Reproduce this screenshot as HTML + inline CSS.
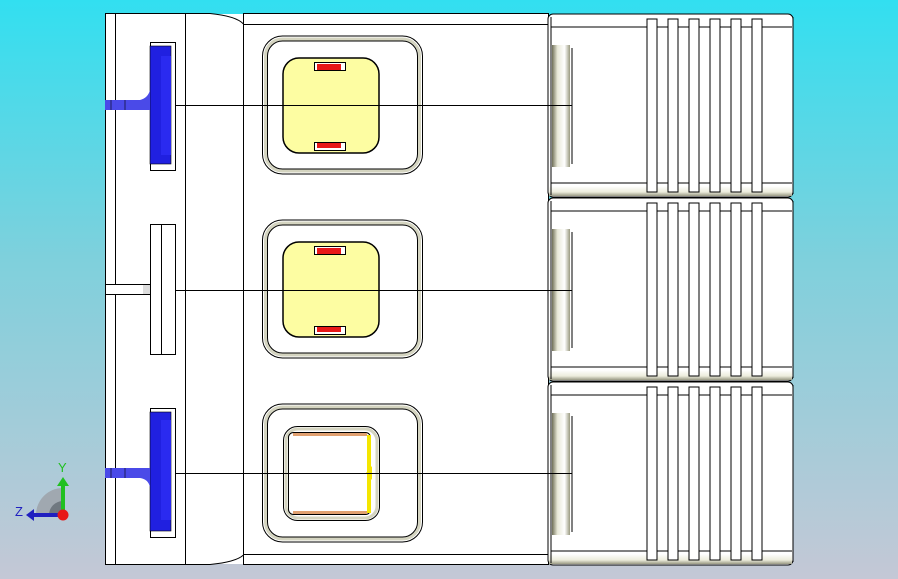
<!DOCTYPE html>
<html><head><meta charset="utf-8"><style>
html,body{margin:0;padding:0;width:898px;height:579px;overflow:hidden}
body{background:linear-gradient(#32dff0 0%,#7fd0dc 45%,#c4c8d6 100%);font-family:"Liberation Sans",sans-serif}
svg{position:absolute;left:0;top:0}
</style></head><body>
<svg width="898" height="579" viewBox="0 0 898 579" xmlns="http://www.w3.org/2000/svg">
<defs>
<linearGradient id="cyl" x1="0" x2="1" y1="0" y2="0">
<stop offset="0" stop-color="#707058"/><stop offset="0.3" stop-color="#e8e8d8"/><stop offset="0.7" stop-color="#ffffff"/><stop offset="1" stop-color="#9a9a80"/></linearGradient>
<linearGradient id="band" x1="0" x2="0" y1="0" y2="1">
<stop offset="0" stop-color="#ffffff"/><stop offset="0.6" stop-color="#ececdc"/><stop offset="1" stop-color="#9a9a84"/></linearGradient>
<g id="fins">
<rect x="647" y="0" width="10" height="173" fill="#fff" stroke="#000"/>
<rect x="668" y="0" width="10" height="173" fill="#fff" stroke="#000"/>
<rect x="689" y="0" width="10" height="173" fill="#fff" stroke="#000"/>
<rect x="710" y="0" width="10" height="173" fill="#fff" stroke="#000"/>
<rect x="731" y="0" width="10" height="173" fill="#fff" stroke="#000"/>
<rect x="752" y="0" width="10" height="173" fill="#fff" stroke="#000"/>
</g>
<g id="mod">
<rect x="548" y="0" width="245" height="183" rx="5" fill="#fff" stroke="#000"/>
<rect x="549" y="172" width="243" height="10" fill="url(#band)"/>
<line x1="551" y1="13" x2="792" y2="13" stroke="#000"/>
<line x1="551" y1="169" x2="792" y2="169" stroke="#000"/>
<line x1="551" y1="3" x2="551" y2="181" stroke="#000"/>
<rect x="552" y="31" width="18" height="122" fill="url(#cyl)"/>
<line x1="572" y1="34" x2="572" y2="150" stroke="#000"/>
<use href="#fins" y="5"/>
<line x1="793" y1="3" x2="793" y2="180" stroke="#000"/>
</g>
<g id="win">
<rect x="262.5" y="0" width="160" height="138" rx="20" fill="none" stroke="#000"/>
<rect x="265.5" y="3" width="154" height="132" rx="17" fill="none" stroke="#d4d4c0" stroke-width="3"/>
<rect x="267.5" y="5" width="150" height="128" rx="15" fill="none" stroke="#000"/>
</g>
</defs>

<rect x="105.5" y="13.5" width="80" height="551" fill="#fff" stroke="#000"/>
<line x1="115.5" y1="14" x2="115.5" y2="565" stroke="#000"/>
<rect x="186" y="14" width="57" height="550" fill="#fff"/>
<path d="M185.5 13.5 L210 13.5 Q236 16 243.5 24" fill="none" stroke="#000"/>
<path d="M185.5 564.5 L210 564.5 Q236 562 243.5 555" fill="none" stroke="#000"/>
<rect x="243.5" y="13.5" width="305" height="551" fill="#fff" stroke="#000"/>
<line x1="243" y1="24.5" x2="548" y2="24.5" stroke="#000"/>
<line x1="243" y1="554.5" x2="548" y2="554.5" stroke="#000"/>

<use href="#mod" y="14"/>
<use href="#mod" y="198"/>
<use href="#mod" y="382"/>

<use href="#win" y="36"/>
<use href="#win" y="220"/>
<use href="#win" y="404"/>

<rect x="283" y="58" width="96" height="95" rx="16" fill="#fdfda2" stroke="#000" stroke-width="1.5"/>
<rect x="314.5" y="62.5" width="31" height="8" fill="#fff" stroke="#000"/>
<rect x="317" y="64" width="24" height="6" fill="#e81818"/>
<rect x="314.5" y="142.5" width="31" height="8" fill="#fff" stroke="#000"/>
<rect x="317" y="143" width="24" height="5" fill="#e81818"/>
<rect x="283" y="242" width="96" height="95" rx="16" fill="#fdfda2" stroke="#000" stroke-width="1.5"/>
<rect x="314.5" y="246.5" width="31" height="8" fill="#fff" stroke="#000"/>
<rect x="317" y="248" width="24" height="6" fill="#e81818"/>
<rect x="314.5" y="326.5" width="31" height="8" fill="#fff" stroke="#000"/>
<rect x="317" y="327" width="24" height="5" fill="#e81818"/>
<rect x="283.5" y="426.5" width="96" height="94" rx="14" fill="#fff" stroke="#000"/>
<rect x="286" y="429" width="91" height="89" rx="12" fill="none" stroke="#d4d4c0" stroke-width="3"/>
<rect x="288.5" y="432.5" width="82" height="82" rx="5" fill="#fff" stroke="#000"/>
<rect x="293" y="433" width="74" height="3" fill="#e0a070"/>
<rect x="293" y="511" width="74" height="3" fill="#e0a070"/>
<rect x="367" y="435" width="4" height="78" fill="#f4e600"/>
<path d="M372 466 L366 473 L372 480 Z" fill="#f4e600"/>

<line x1="105" y1="105.5" x2="572" y2="105.5" stroke="#000"/>
<line x1="105" y1="290.5" x2="572" y2="290.5" stroke="#000"/>
<line x1="105" y1="473.5" x2="572" y2="473.5" stroke="#000"/>

<rect x="150.5" y="42.5" width="25" height="128" fill="#fff" stroke="#000"/>
<rect x="150" y="46" width="21" height="118" fill="#2020e0" stroke="#000" stroke-width="0.6"/>
<line x1="161.5" y1="56" x2="161.5" y2="155" stroke="#000" stroke-width="0.6"/>
<rect x="161" y="56" width="10" height="99" fill="#2a2af0"/>
<path d="M105 100 L140 100 Q148 98 150 90 L150 110 L105 110 Z" fill="#4a4ae8"/>
<line x1="111" y1="100" x2="111" y2="110" stroke="#000" stroke-width="0.6"/>
<line x1="125" y1="100" x2="125" y2="110" stroke="#000" stroke-width="0.6"/>
<rect x="150.5" y="224.5" width="25" height="130" fill="#fff" stroke="#000"/>
<line x1="161.5" y1="225" x2="161.5" y2="354" stroke="#000"/>
<rect x="105.5" y="284.5" width="45" height="10" fill="#fff" stroke="#000"/>
<rect x="143" y="285" width="7" height="9" fill="#ddd"/>
<rect x="150.5" y="408.5" width="25" height="129" fill="#fff" stroke="#000"/>
<rect x="150" y="412" width="21" height="119" fill="#2020e0" stroke="#000" stroke-width="0.6"/>
<rect x="161" y="420" width="10" height="100" fill="#2a2af0"/>
<path d="M105 468 L150 468 L150 487 Q148 479 140 478 L105 478 Z" fill="#4a4ae8"/>
<line x1="111" y1="468" x2="111" y2="478" stroke="#000" stroke-width="0.6"/>
<line x1="125" y1="468" x2="125" y2="478" stroke="#000" stroke-width="0.6"/>

<path d="M36 515 A27 27 0 0 1 63 488 L63 515 Z" fill="#a0a8b0"/>
<path d="M49 515 A14 14 0 0 1 63 501 L63 515 Z" fill="#707880"/>
<rect x="61" y="484" width="4" height="30" fill="#20c020"/>
<path d="M57 486 L63 477 L69 486 Z" fill="#20c020"/>
<rect x="32" y="513" width="30" height="4" fill="#2020c0"/>
<path d="M34 509 L26 515 L34 521 Z" fill="#2020c0"/>
<circle cx="63" cy="515" r="5.5" fill="#e81818"/>
<text x="58" y="472" font-size="13" fill="#20c020" font-family="Liberation Sans,sans-serif">Y</text>
<text x="15" y="516" font-size="13" fill="#2020c0" font-family="Liberation Sans,sans-serif">Z</text>
</svg>
</body></html>
